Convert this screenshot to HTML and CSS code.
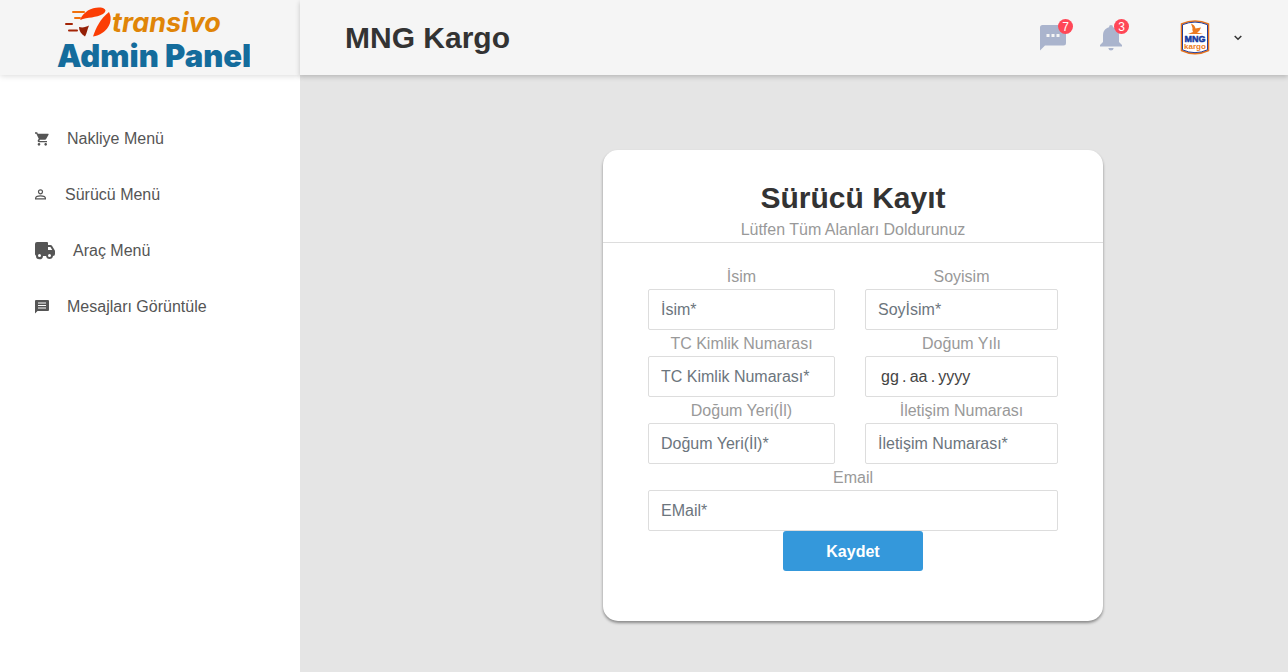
FILE: index.html
```html
<!DOCTYPE html>
<html lang="tr">
<head>
<meta charset="utf-8">
<title>Transivo Admin Panel</title>
<link rel="stylesheet" href="styles.css">
</head>
<body>
<div class="app">
  <aside class="sidebar">
    <a class="brand" href="#" aria-label="Transivo Admin Panel">
      <svg width="200" height="75" viewBox="0 0 200 75">
        <g stroke-width="2" stroke-linecap="round">
          <path d="M23 12H34M25 18H30" stroke="#f0700c" />
          <path d="M16 24H22M19 30.500H27" stroke="#a32406" />
        </g>
        <path d="M30 20C34 10 45 6 53 8Q58 10 53 14C46 18 38 17 30 20Z" fill="#fb3d04" />
        <path d="M59 12C64 22 57 34 43 36.500C46 28 50 19 59 12Z" fill="#fb3d04" />
        <path d="M29 27C33 28 36 27 39 25.500C37 30 37 33 35 36.500C31 34 29 31 29 27Z" fill="#941f05" />
        <text class="brand-name" x="62" y="32">transivo</text>
        <text class="brand-panel" x="7" y="67">Admin Panel</text>
      </svg>
    </a>
    <nav class="menu">
      <a class="menu-link" href="#">
        <svg width="14" height="14" viewBox="1 2 21 20"><path d="M7 18c-1.100 0-2 .9-2 2s.9 2 2 2 2-.9 2-2-.9-2-2-2zM1 2v2h2l3.600 7.600-1.400 2.400c-.7 1.300.3 3 1.800 3h12v-2H7.400l1.100-2h7.500c.8 0 1.400-.4 1.700-1l3.600-6.500C21.700 4.800 21.200 4 20.400 4H5.200l-.9-2H1zm16 16c-1.100 0-2 .9-2 2s.9 2 2 2 2-.9 2-2-.9-2-2-2z"/></svg>
        <span>Nakliye Menü</span>
      </a>
      <a class="menu-link" href="#">
        <svg width="12" height="12" viewBox="0 0 12 12"><g fill="none" stroke="currentColor" stroke-width="1.200"><circle cx="5.500" cy="2.800" r="2"/><path d="M.6 9.900V9.200C.6 7.500 3.300 6.900 5.500 6.900S10.400 7.500 10.400 9.200V9.900Z"/></g></svg>
        <span>Sürücü Menü</span>
      </a>
      <a class="menu-link" href="#">
        <svg width="20" height="18" viewBox="2 4 20 18"><path d="M19.150 8a2 2 0 0 0-1.720-1H15V5a1 1 0 0 0-1-1H4a2 2 0 0 0-2 2v10a2 2 0 0 0 1 1.730 3.490 3.490 0 0 0 7 .27h3.100a3.480 3.480 0 0 0 6.900 0 2 2 0 0 0 2-2v-3a1.070 1.070 0 0 0-.14-.52zM15 9h2.430l1.800 3H15zM6.500 19A1.500 1.500 0 1 1 8 17.500 1.500 1.500 0 0 1 6.500 19zm10 0a1.500 1.500 0 1 1 1.500-1.500 1.500 1.500 0 0 1-1.500 1.500z"/></svg>
        <span>Araç Menü</span>
      </a>
      <a class="menu-link" href="#">
        <svg width="14" height="14" viewBox="0 0 14 14"><path d="M1 0H13Q14 0 14 1V10Q14 11 13 11H2.500L0 13.500V1Q0 0 1 0ZM3 2.500V3.500H11V2.500ZM3 5V6H11V5ZM3 7.500V8.500H11V7.500Z" fill-rule="evenodd"/></svg>
        <span>Mesajları Görüntüle</span>
      </a>
    </nav>
  </aside>
  <div class="page">
    <header class="topbar">
      <h1 class="company">MNG Kargo</h1>
      <div class="actions">
        <button class="icon-button" type="button" aria-label="Mesajlar">
          <svg width="26" height="26" viewBox="0 0 26 26"><path d="M2.500 0H23.500Q26 0 26 2.500V18Q26 20.500 23.500 20.500H5L0 25.500V2.500Q0 0 2.500 0Z" fill="#aab4cd"/><path d="M6.500 9h3v3h-3zM11.500 9h3v3h-3zM16.500 9h3v3h-3z" fill="#f5f5f5"/></svg>
          <span class="badge">7</span>
        </button>
        <button class="icon-button bell" type="button" aria-label="Bildirimler">
          <svg width="22" height="26" viewBox="0 0 22 26"><path d="M11 0Q13 0 13 2.300C17 3.300 19 6.500 19 10.500V17L22 20V21.500H0V20L3 17V10.500C3 6.500 5 3.300 9 2.300Q9 0 11 0ZM8.300 23H13.700Q13.300 25.500 11 25.500T8.300 23Z" fill="#aab4cd"/></svg>
          <span class="badge">3</span>
        </button>
        <button class="account" type="button" aria-label="Hesap">
          <svg width="30" height="36" viewBox="0 0 30 36">
            <path d="M1.500 4Q15-2 28.500 4V30.500Q15 37 1.500 30.500Z" fill="#fff" stroke="#e8741c" stroke-width="1.500"/>
            <path d="M2.500 4.700Q15-.5 27.500 4.700V29.800Q15 35.500 2.500 29.800Z" fill="none" stroke="#263f98" stroke-width="1"/>
            <path d="M11 3.500Q15 5 15.500 8.500Q18 8 21 7.500Q20 11 17 12.500L23 14H8L13 12Q12 10 12.500 8Z" fill="#ec7a20"/>
            <text class="mark-mng" x="15" y="22">MNG</text>
            <text class="mark-kargo" x="15" y="29">kargo</text>
          </svg>
          <svg width="8" height="6" viewBox="0 0 8 6"><path d="M.7 1L4 4.300L7.300 1" fill="none" stroke="#333" stroke-width="1.500"/></svg>
        </button>
      </div>
    </header>
    <main class="content">
      <section class="card">
        <div class="card-head">
          <h2 class="card-title">Sürücü Kayıt</h2>
          <p class="card-note">Lütfen Tüm Alanları Doldurunuz</p>
        </div>
        <form class="form">
          <div class="field"><label for="isim">İsim</label><input id="isim" type="text" placeholder="İsim*"></div>
          <div class="field"><label for="soyisim">Soyisim</label><input id="soyisim" type="text" placeholder="Soyİsim*"></div>
          <div class="field"><label for="tc">TC Kimlik Numarası</label><input id="tc" type="text" placeholder="TC Kimlik Numarası*"></div>
          <div class="field"><label for="dogum">Doğum Yılı</label><input id="dogum" class="date" type="text" placeholder="gg&thinsp;.&thinsp;aa&thinsp;.&thinsp;yyyy"></div>
          <div class="field"><label for="yer">Doğum Yeri(İl)</label><input id="yer" type="text" placeholder="Doğum Yeri(İl)*"></div>
          <div class="field"><label for="tel">İletişim Numarası</label><input id="tel" type="tel" placeholder="İletişim Numarası*"></div>
          <div class="field wide"><label for="email">Email</label><input id="email" type="email" placeholder="EMail*"></div>
          <button class="save" type="submit">Kaydet</button>
        </form>
      </section>
    </main>
  </div>
</div>
</body>
</html>
```

FILE: styles.css
```css
* {
  box-sizing: border-box;
}

body {
  margin: 0;
  font: 16px/24px "Liberation Sans", Arial, sans-serif;
  color: #333;
  background: #e5e5e5;
}

h1, h2, p {
  margin: 0;
}

button, input {
  font: inherit;
}

.app {
  display: flex;
  min-height: 100vh;
}

.sidebar {
  flex: 0 0 300px;
  background: #fff;
}

.brand {
  display: flex;
  justify-content: center;
  height: 75px;
  background: #f5f5f5;
  box-shadow: 0 1px 6px rgba(0, 0, 0, 0.15);
}

.brand-name {
  font: italic 700 27px Inter, sans-serif;
  fill: #e08508;
}

.brand-panel {
  font: 900 31px Inter, sans-serif;
  fill: #146c9c;
}

.menu {
  display: flex;
  flex-direction: column;
  padding: 36px 0;
}

.menu-link {
  display: flex;
  align-items: center;
  gap: 18px;
  height: 56px;
  padding-left: 35px;
  color: #555;
  text-decoration: none;
}

.menu-link svg {
  fill: currentColor;
}

.page {
  flex: 1;
  min-width: 0;
}

.topbar {
  display: flex;
  align-items: center;
  justify-content: space-between;
  height: 75px;
  padding: 0 46px 0 45px;
  background: #f5f5f5;
  box-shadow: 0 2px 5px rgba(0, 0, 0, 0.2);
}

.company {
  font-size: 30px;
  line-height: 40px;
}

.actions {
  display: flex;
  align-items: center;
}

.icon-button, .account {
  display: flex;
  align-items: center;
  padding: 0;
  border: 0;
  background: none;
}

.icon-button {
  position: relative;
  margin-right: 34px;
}

.bell {
  margin-right: 58px;
}

.badge {
  position: absolute;
  top: -6px;
  right: -7px;
  width: 15px;
  height: 15px;
  border-radius: 50%;
  background: #ff4757;
  color: #fff;
  font-size: 12px;
  line-height: 16px;
  text-align: center;
}

.account {
  gap: 24px;
}

.mark-mng, .mark-kargo {
  font: bold 9px "Liberation Sans", Arial, sans-serif;
  text-anchor: middle;
  fill: #1438a0;
  stroke: #1438a0;
  stroke-width: 0.5;
}

.mark-kargo {
  font-size: 8px;
  fill: #ec7a20;
  stroke: none;
}

.content {
  display: flex;
  justify-content: center;
  padding: 75px 0 50px 118px;
}

.card {
  width: 500px;
  border-radius: 15px;
  background: #fff;
  box-shadow: 0 2px 3px rgba(0, 0, 0, 0.4);
}

.card-head {
  padding-top: 28px;
  border-bottom: 1px solid #ddd;
  text-align: center;
}

.card-title {
  font-size: 30px;
  line-height: 40px;
}

.card-note {
  color: #999;
}

.form {
  display: grid;
  grid-template-columns: 187fr 193fr;
  column-gap: 30px;
  padding: 20px 45px 50px;
}

.field {
  display: flex;
  flex-direction: column;
}

.field label {
  padding-top: 2px;
  color: #999;
  text-align: center;
}

.field input {
  width: 100%;
  height: 41px;
  padding: 0 12px;
  border: 1px solid #ddd;
  border-radius: 2px;
  background: #fff;
  color: #495057;
}

.field input::placeholder {
  color: #6c757d;
  opacity: 1;
}

.field .date {
  padding-left: 15px;
}

.field .date::placeholder {
  color: #444;
}

.wide {
  grid-column: 1 / -1;
}

.save {
  grid-column: 1 / -1;
  justify-self: center;
  width: 140px;
  height: 40px;
  padding-top: 2px;
  border: 0;
  border-radius: 3px;
  background: #3498db;
  color: #fff;
  font-weight: bold;
}
```
